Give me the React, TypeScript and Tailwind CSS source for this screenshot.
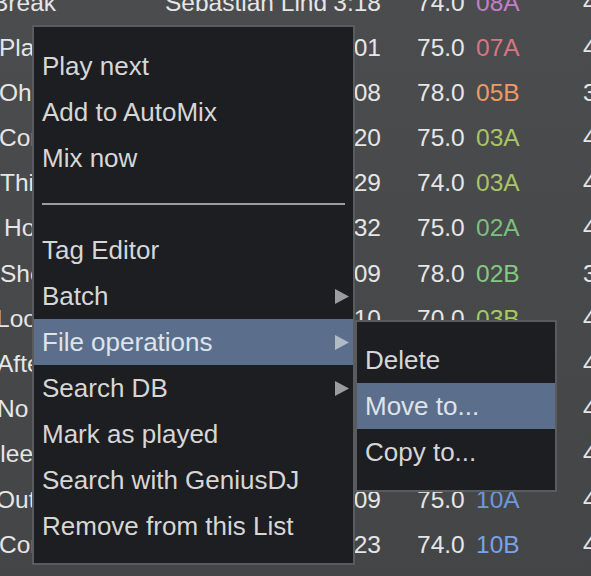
import React from "react";

type Row = {
  title: string;
  off: string;
  artist: string;
  time: string;
  bpm: string;
  key: string;
  keyColor: string;
  last: string;
};

const rows: Row[] = [
  { title: "Break", off: "ml-[-8px]", artist: "Sebastian Lind", time: "3:18", bpm: "74.0", key: "08A", keyColor: "text-[#c27fc6]", last: "4" },
  { title: "Playground", off: "ml-[-1px]", artist: "Sebastian Lind", time: "4:01", bpm: "75.0", key: "07A", keyColor: "text-[#d97580]", last: "4" },
  { title: "Oh My", off: "ml-[-1px]", artist: "Sebastian Lind", time: "3:08", bpm: "78.0", key: "05B", keyColor: "text-[#ef9a62]", last: "3" },
  { title: "Cornerstone", off: "ml-[-1px]", artist: "Sebastian Lind", time: "4:20", bpm: "75.0", key: "03A", keyColor: "text-[#a9c466]", last: "4" },
  { title: "Thirteen", off: "ml-[0px]", artist: "Sebastian Lind", time: "4:29", bpm: "74.0", key: "03A", keyColor: "text-[#a9c466]", last: "4" },
  { title: "Hold On", off: "ml-[4px]", artist: "Sebastian Lind", time: "3:32", bpm: "75.0", key: "02A", keyColor: "text-[#7dbf7c]", last: "4" },
  { title: "Shelter", off: "ml-[0px]", artist: "Sebastian Lind", time: "3:09", bpm: "78.0", key: "02B", keyColor: "text-[#83c982]", last: "3" },
  { title: "Loose Ends", off: "ml-[-4px]", artist: "Sebastian Lind", time: "4:10", bpm: "70.0", key: "03B", keyColor: "text-[#a2cc5c]", last: "4" },
  { title: "After All", off: "ml-[-3px]", artist: "Sebastian Lind", time: "3:44", bpm: "76.0", key: "04A", keyColor: "text-[#a9c466]", last: "4" },
  { title: "No Way", off: "ml-[-3px]", artist: "Sebastian Lind", time: "3:51", bpm: "72.0", key: "09A", keyColor: "text-[#6f96d8]", last: "4" },
  { title: "Bleeding", off: "ml-[-16px]", artist: "Sebastian Lind", time: "4:02", bpm: "74.0", key: "09B", keyColor: "text-[#6f96d8]", last: "4" },
  { title: "Outrun", off: "ml-[-4px]", artist: "Sebastian Lind", time: "3:09", bpm: "75.0", key: "10A", keyColor: "text-[#6f97d9]", last: "4" },
  { title: "Cornered", off: "ml-[-1px]", artist: "Sebastian Lind", time: "3:23", bpm: "74.0", key: "10B", keyColor: "text-[#79a2ea]", last: "4" },
];

function Arrow({ light }: { light?: boolean }) {
  return (
    <svg width="14" height="15" viewBox="0 0 14 15" className="shrink-0">
      <polygon points="0,0 14,7.5 0,15" fill={light ? "#b3bac7" : "#9c9c9e"} />
    </svg>
  );
}

type Item = { label?: string; sep?: boolean; sub?: boolean; active?: boolean };

const items: Item[] = [
  { label: "Play next" },
  { label: "Add to AutoMix" },
  { label: "Mix now" },
  { sep: true },
  { label: "Tag Editor" },
  { label: "Batch", sub: true },
  { label: "File operations", sub: true, active: true },
  { label: "Search DB", sub: true },
  { label: "Mark as played" },
  { label: "Search with GeniusDJ" },
  { label: "Remove from this List" },
];

const subItems = [
  { label: "Delete" },
  { label: "Move to...", active: true },
  { label: "Copy to..." },
];

export default function App() {
  return (
    <div
      className="relative w-[591px] h-[576px] overflow-hidden bg-linear-to-b from-[#4b4c4e] to-[#444547]"
      style={{ fontFamily: '"Liberation Sans", Arial, Helvetica, sans-serif' }}
    >
      {/* track list */}
      <div className="mt-[-19.8px] flex flex-col">
        {rows.map((r, i) => (
          <div
            key={i}
            className="flex items-center h-[45.2px] whitespace-nowrap text-[24.5px] leading-none text-[#e6e6e6]"
          >
            <div className="w-[165px] shrink-0 overflow-hidden">
              <span className={`block ${r.off}`}>{r.title}</span>
            </div>
            <div className="w-[165px] shrink-0 overflow-hidden">{r.artist}</div>
            <div className="w-[51px] shrink-0 text-right">{r.time}</div>
            <div className="w-[36px] shrink-0" />
            <div className="w-[59px] shrink-0">{r.bpm}</div>
            <div className={`w-[107px] shrink-0 ${r.keyColor}`}>{r.key}</div>
            <div className="shrink-0">{r.last}</div>
          </div>
        ))}
      </div>

      {/* context menu */}
      <div className="absolute left-[32px] top-[25px] w-[323px] h-[540px] border-2 border-[#5a5b5d] bg-[#1d1e21] pt-[16px] pb-[14px] text-[26px] leading-none text-[#d6d6d6]">
        {items.map((it, i) =>
          it.sep ? (
            <div key={i} className="h-[46px] flex items-center px-2">
              <div className="h-[2px] w-full bg-[#9d9d9f]" />
            </div>
          ) : (
            <div
              key={i}
              className={`h-[46px] flex items-center justify-between pl-[8px] pr-[4px] ${
                it.active ? "bg-[#5b6f8d] text-[#dfe3ea]" : ""
              }`}
            >
              <span className="whitespace-nowrap">{it.label}</span>
              {it.sub && <Arrow light={it.active} />}
            </div>
          )
        )}
      </div>

      {/* submenu */}
      <div className="absolute left-[355px] top-[320px] w-[202px] h-[172px] border-2 border-[#5a5b5d] bg-[#1d1e21] pt-[15px] text-[26px] leading-none text-[#d6d6d6]">
        {subItems.map((it, i) => (
          <div
            key={i}
            className={`h-[46px] flex items-center pl-[8px] ${
              it.active ? "bg-[#5b6f8d] text-[#dfe3ea]" : ""
            }`}
          >
            <span className="whitespace-nowrap">{it.label}</span>
          </div>
        ))}
      </div>
    </div>
  );
}
